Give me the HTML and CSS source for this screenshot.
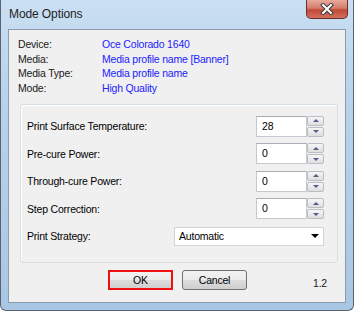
FILE: index.html
```html
<!DOCTYPE html>
<html lang="en">
<head>
    <meta charset="UTF-8">
    <title>Mode Options</title>
    <link rel="stylesheet" href="styles.css">
</head>
<body>
    <div class="window">
        <div class="titlebar">
            <span class="title">Mode Options</span>
            <button class="close-btn" aria-label="Close">
                <svg width="14" height="12" viewBox="0 0 14 12">
                    <path d="M3 2 L11 10 M11 2 L3 10" stroke="#3a3a3a" stroke-width="4" stroke-linecap="square"/>
                    <path d="M3 2 L11 10 M11 2 L3 10" stroke="#ffffff" stroke-width="2" stroke-linecap="square"/>
                </svg>
            </button>
        </div>

        <div class="client">
            <div class="info">
                <span class="info-label">Device:</span><span class="info-value">Oce Colorado 1640</span>
                <span class="info-label">Media:</span><span class="info-value">Media profile name [Banner]</span>
                <span class="info-label">Media Type:</span><span class="info-value">Media profile name</span>
                <span class="info-label">Mode:</span><span class="info-value">High Quality</span>
            </div>

            <div class="group">
                <div class="field">
                    <span>Print Surface Temperature:</span>
                    <div class="spin">
                        <div class="spin-input">28</div>
                        <div class="spin-buttons">
                            <div class="spin-btn"><span class="arrow-up"></span></div>
                            <div class="spin-btn"><span class="arrow-down"></span></div>
                        </div>
                    </div>
                </div>
                <div class="field">
                    <span>Pre-cure Power:</span>
                    <div class="spin">
                        <div class="spin-input">0</div>
                        <div class="spin-buttons">
                            <div class="spin-btn"><span class="arrow-up"></span></div>
                            <div class="spin-btn"><span class="arrow-down"></span></div>
                        </div>
                    </div>
                </div>
                <div class="field">
                    <span>Through-cure Power:</span>
                    <div class="spin">
                        <div class="spin-input">0</div>
                        <div class="spin-buttons">
                            <div class="spin-btn"><span class="arrow-up"></span></div>
                            <div class="spin-btn"><span class="arrow-down"></span></div>
                        </div>
                    </div>
                </div>
                <div class="field">
                    <span>Step Correction:</span>
                    <div class="spin">
                        <div class="spin-input">0</div>
                        <div class="spin-buttons">
                            <div class="spin-btn"><span class="arrow-up"></span></div>
                            <div class="spin-btn"><span class="arrow-down"></span></div>
                        </div>
                    </div>
                </div>
                <div class="field">
                    <span>Print Strategy:</span>
                    <div class="combo">
                        <span>Automatic</span>
                        <span class="combo-arrow"></span>
                    </div>
                </div>
            </div>

            <div class="actions">
                <button class="btn btn-default">OK</button>
                <button class="btn">Cancel</button>
                <span class="version">1.2</span>
            </div>
        </div>
    </div>
</body>
</html>
```

FILE: styles.css
```css
body {
    margin: 0;
    font-family: "Liberation Sans", Arial, sans-serif;
    font-size: 10.5px;
    letter-spacing: -0.2px;
    color: #000;
    background: #fff;
}
.window {
    width: 354px;
    height: 311px;
    box-sizing: border-box;
    display: flex;
    flex-direction: column;
    padding: 0 7px 7px 7px;
    border: 1px solid #5b636e;
    border-top: none;
    border-radius: 0 0 6px 6px;
    background: linear-gradient(180deg, #cadff3 0%, #b9d3ec 30%, #a9c6e4 100%);
}
.titlebar {
    height: 29px;
    display: flex;
    justify-content: space-between;
    align-items: flex-start;
}
.title {
    font-size: 12px;
    letter-spacing: -0.1px;
    color: #1e1e1e;
    margin-top: 7px;
    margin-left: 1px;
}
.close-btn {
    width: 42px;
    height: 19px;
    margin-right: -2px;
    padding: 0;
    border: 1px solid #6d2d28;
    border-top: none;
    border-radius: 0 0 5px 5px;
    background: linear-gradient(180deg, #e9a99a 0%, #d47d6d 45%, #c24a38 55%, #d0705c 100%);
    display: flex;
    align-items: center;
    justify-content: center;
}
.client {
    flex: 1;
    background: #f0f0f0;
    border: 1px solid #8a9bb0;
    display: flex;
    flex-direction: column;
    padding: 7px 7px 0 11px;
}
.info {
    display: grid;
    grid-template-columns: 84px auto;
    line-height: 14.6px;
    margin-left: -2px;
}
.info-label {
    color: #1a1a1a;
}
.info-value {
    color: #2222ff;
}
.group {
    margin-top: 9px;
    border: 1px solid #d5dfe5;
    border-radius: 3px;
    box-shadow: inset 1px 1px 0 #fff;
    padding: 11px 13px 16px 6px;
    display: flex;
    flex-direction: column;
    gap: 7.5px;
}
.field {
    height: 20px;
    display: flex;
    align-items: center;
    justify-content: space-between;
}
.spin {
    display: flex;
    height: 21px;
}
.spin-input {
    background: #fff;
    border: 1px solid #c5c9cf;
    border-top-color: #abadb3;
    padding: 3px 0 0 5px;
    box-sizing: border-box;
    width: 51px;
}
.spin-buttons {
    width: 17px;
    display: flex;
    flex-direction: column;
    gap: 1px;
}
.spin-btn {
    flex: 1;
    border: 1px solid #b9bdc4;
    border-radius: 2px;
    background: linear-gradient(180deg, #f6f6f6, #dedede);
    display: flex;
    align-items: center;
    justify-content: center;
}
.arrow-up {
    width: 0;
    height: 0;
    border-left: 3px solid transparent;
    border-right: 3px solid transparent;
    border-bottom: 3px solid #4d6185;
}
.arrow-down {
    width: 0;
    height: 0;
    border-left: 3px solid transparent;
    border-right: 3px solid transparent;
    border-top: 3px solid #4d6185;
}
.combo {
    width: 150px;
    height: 19px;
    box-sizing: border-box;
    background: #fff;
    border: 1px solid #d0d3d8;
    display: flex;
    align-items: center;
    justify-content: space-between;
    padding: 0 4px 0 4px;
}
.combo-arrow {
    width: 0;
    height: 0;
    border-left: 4px solid transparent;
    border-right: 4px solid transparent;
    border-top: 4px solid #000;
}
.actions {
    display: flex;
    align-items: center;
    margin-top: 7px;
    padding-left: 88px;
    gap: 9px;
}
.btn {
    width: 65px;
    height: 20px;
    font-family: inherit;
    font-size: 10.5px;
    letter-spacing: -0.2px;
    color: #000;
    border: 1px solid #707070;
    border-radius: 3px;
    background: linear-gradient(180deg, #f2f2f2 0%, #ebebeb 50%, #dddddd 51%, #cfcfcf 100%);
    padding: 0;
}
.btn-default {
    border: 2px solid #ee1111;
    border-radius: 0;
}
.version {
    margin-left: auto;
    margin-right: 11px;
    margin-top: 6px;
    color: #1a1a1a;
}
```
